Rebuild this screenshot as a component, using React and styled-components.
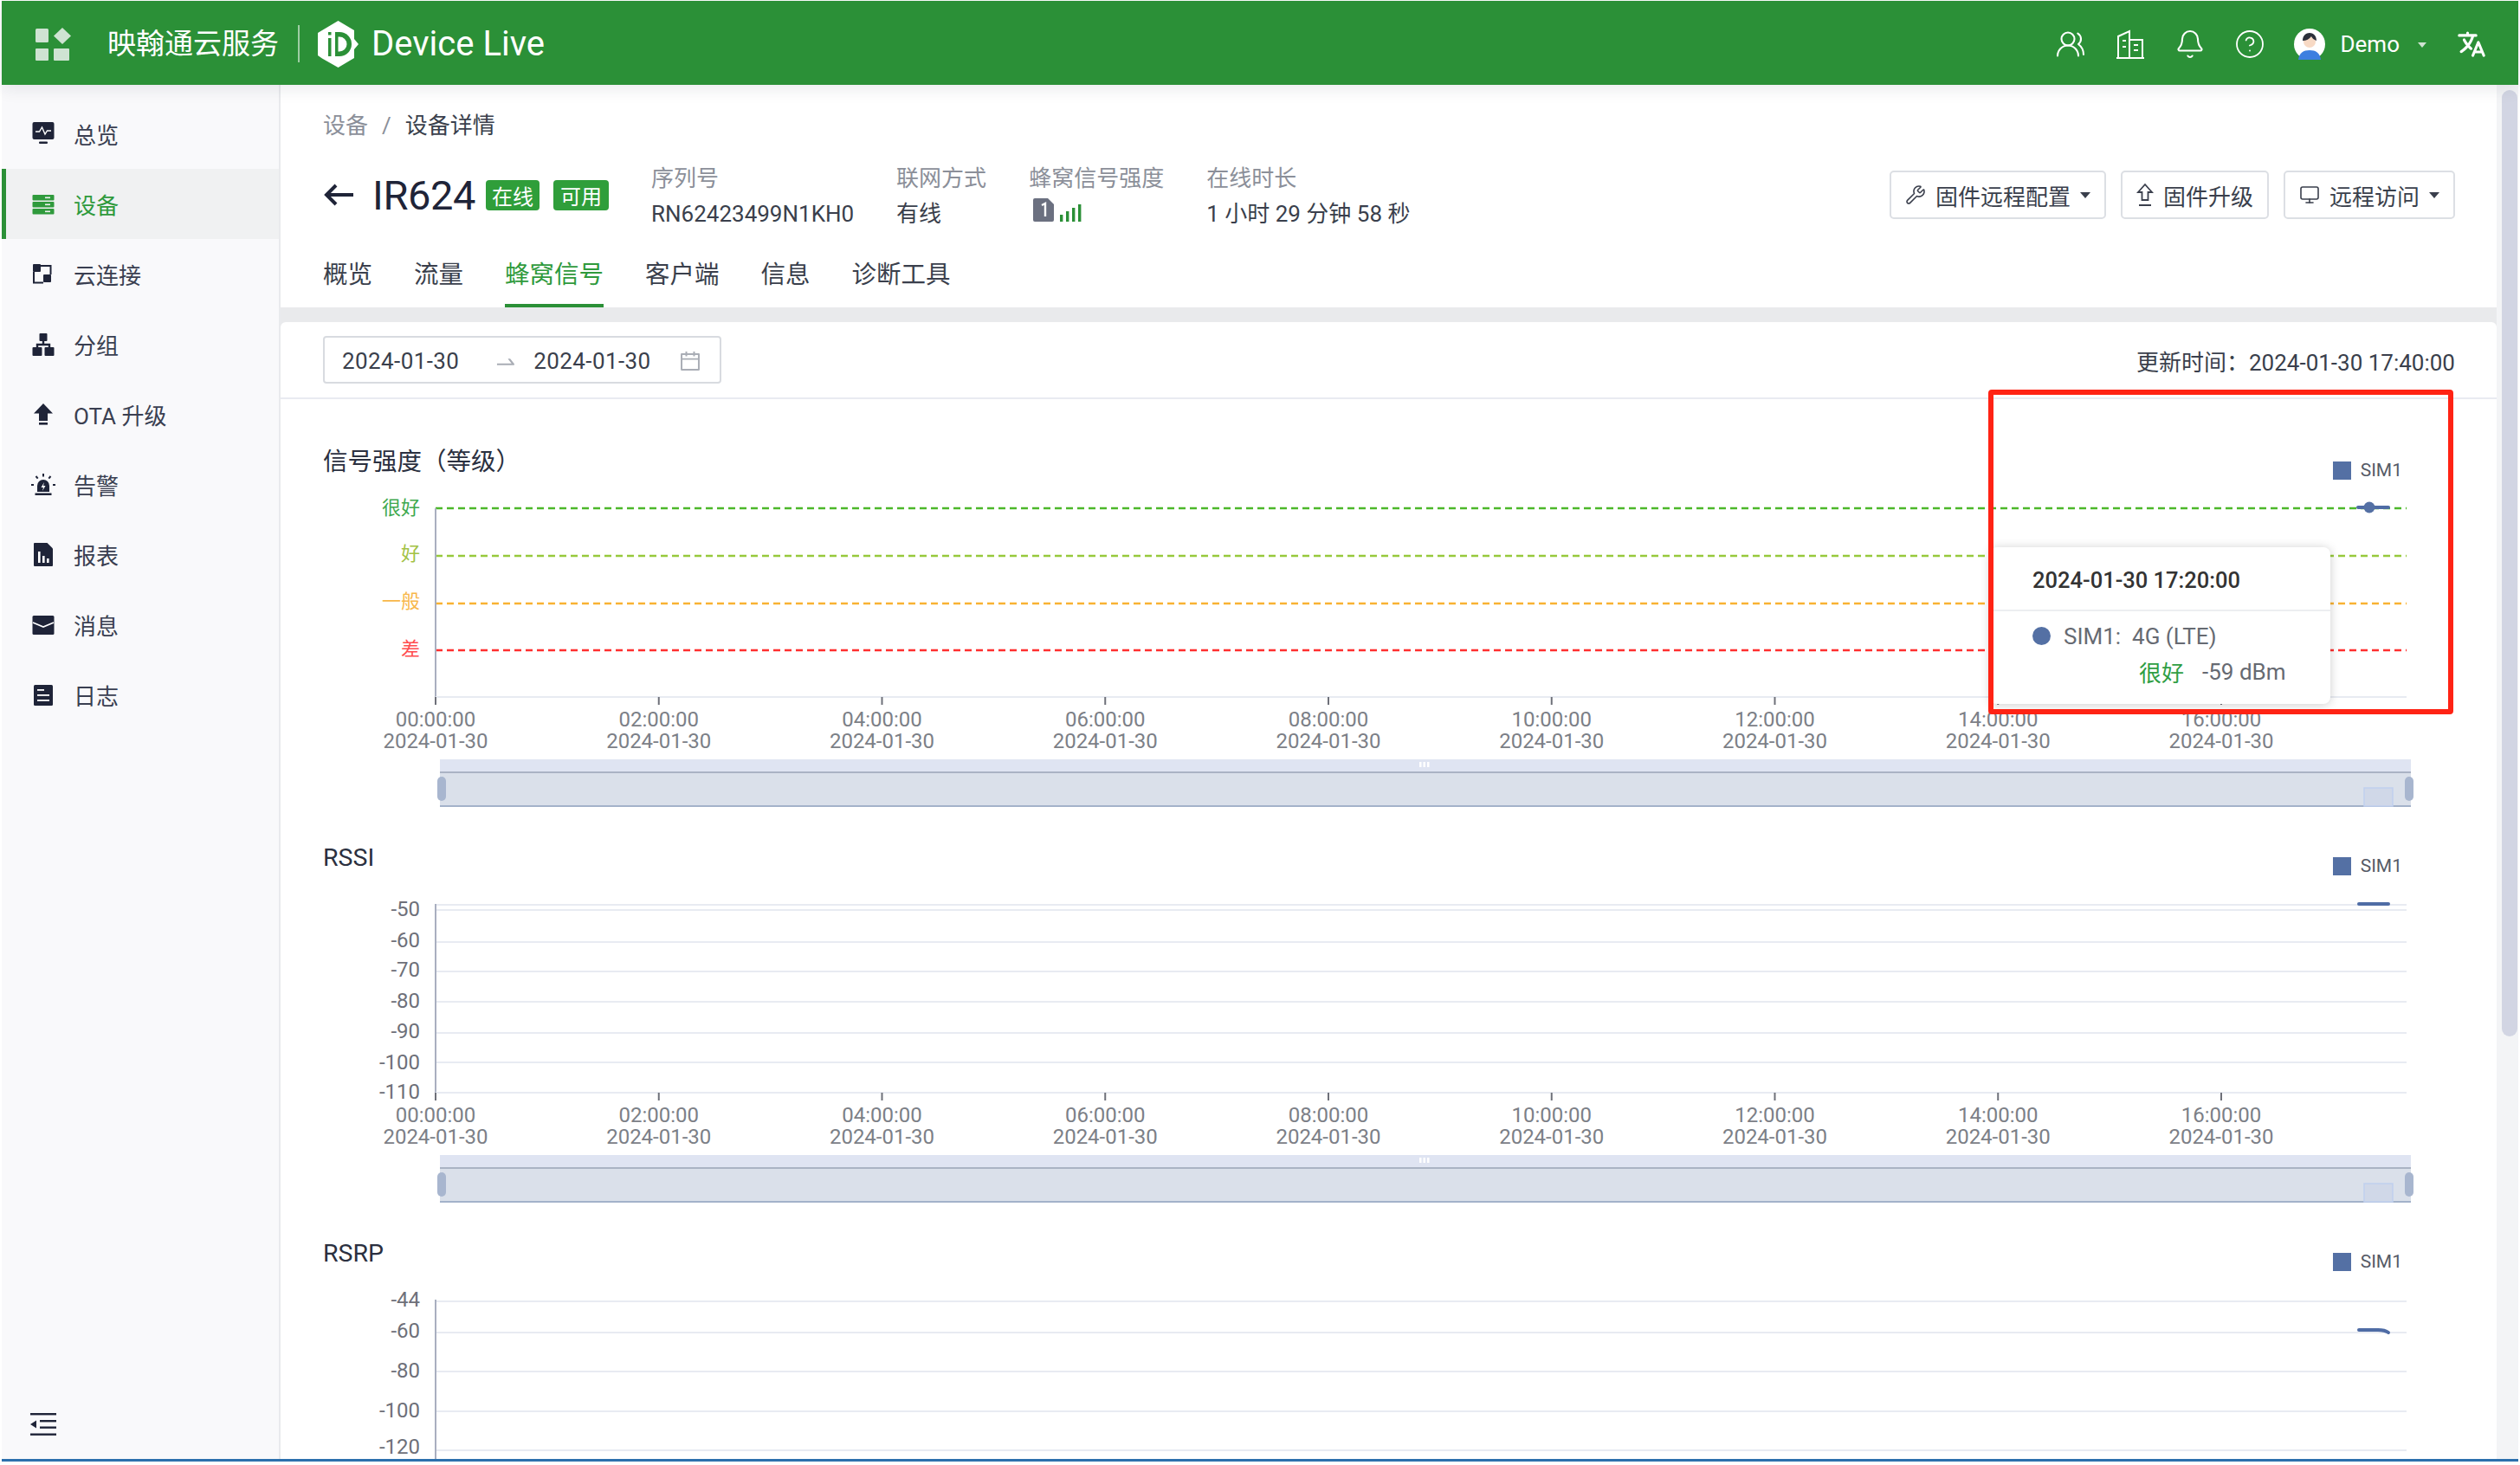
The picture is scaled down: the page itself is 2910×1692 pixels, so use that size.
import React from 'react';
import styled, { createGlobalStyle } from 'styled-components';
import { Bell, CircleHelp, UsersRound, Wrench, Monitor } from 'lucide-react';
import { AiOutlineSwapRight, AiOutlineCalendar } from 'react-icons/ai';
import { IoLanguage } from 'react-icons/io5';

const FONT = `Roboto, "Noto Sans CJK SC", sans-serif`;
const DARK = '#1f2438';
const GREEN = '#2b9037';

const GlobalStyle = createGlobalStyle`
  html, body {
    margin: 0;
    padding: 0;
    background: #fff;
  }
  * { box-sizing: border-box; }
`;

const Shell = styled.div`
  height: 100vh;
  padding: 1px 2px 4px;
  display: flex;
  flex-direction: column;
  overflow: hidden;
  font-family: ${FONT};
  font-size: 26px;
  color: #3a3f4c;
`;

const Header = styled.header`
  flex: 0 0 97px;
  display: flex;
  align-items: center;
  background: ${GREEN};
  color: #fff;
  padding: 2px 36px 0 39px;
  box-shadow: 0 4px 18px rgba(30, 40, 60, 0.1);
  position: relative;
  z-index: 2;
`;

const AppsIcon = styled.svg`
  width: 41px;
  height: 38px;
  flex: none;
`;

const BrandName = styled.div`
  margin-left: 42px;
  font-size: 33px;
  line-height: 1;
  white-space: nowrap;
`;

const BrandDivider = styled.div`
  width: 2px;
  height: 43px;
  margin: 0 21px 0 22px;
  background: rgba(255, 255, 255, 0.55);
`;

const LogoMark = styled.svg`
  width: 47px;
  height: 54px;
  flex: none;
`;

const ProductName = styled.div`
  margin-left: 15px;
  font-size: 40px;
  line-height: 1;
  white-space: nowrap;
`;

const HeaderRight = styled.div`
  margin-left: auto;
  display: flex;
  align-items: center;
`;

const HeaderIcon = styled.div`
  width: 36px;
  height: 40px;
  margin-right: 33px;
  display: flex;
  align-items: center;
  justify-content: center;
`;

const Avatar = styled.svg`
  width: 36px;
  height: 36px;
  flex: none;
`;

const UserName = styled.span`
  margin-left: 18px;
  font-size: 26px;
`;

const Caret = styled.i`
  display: block;
  flex: none;
  width: 0;
  height: 0;
  border-left: ${p => p.$size || 6}px solid transparent;
  border-right: ${p => p.$size || 6}px solid transparent;
  border-top: ${p => (p.$size || 6) + 1}px solid ${p => p.$color || '#3a3f4c'};
`;

const UserCaret = styled(Caret)`
  margin: 2px 34px 0 21px;
`;

const Body = styled.div`
  flex: 1;
  min-height: 0;
  display: flex;
  border-bottom: 3px solid #2c70ad;
`;

const Sidebar = styled.nav`
  flex: 0 0 322px;
  display: flex;
  flex-direction: column;
  padding: 16px 0 27px;
  background: #f9f9fb;
  border-right: 2px solid #e9eaed;
`;

const NavItem = styled.a`
  height: 81px;
  flex: none;
  display: flex;
  align-items: center;
  gap: 20px;
  padding-left: 28px;
  border-left: 5px solid ${p => (p.$active ? GREEN : 'transparent')};
  background: ${p => (p.$active ? '#f0f1f2' : 'transparent')};
  color: ${p => (p.$active ? '#2f9a3c' : '#3a3f51')};
  font-size: 26px;
  white-space: nowrap;
`;

const NavIcon = styled.svg`
  width: 30px;
  height: 30px;
  flex: none;
  fill: ${p => p.$color || DARK};
`;

const Collapse = styled.svg`
  width: 30px;
  height: 26px;
  margin: auto 0 0 33px;
  flex: none;
`;

const Main = styled.main`
  flex: 1;
  min-width: 0;
  display: flex;
`;

const Content = styled.div`
  flex: 1;
  min-width: 0;
  display: flex;
  flex-direction: column;
  background: #e9eaec;
  overflow: hidden;
`;

const PageHead = styled.div`
  flex: none;
  background: #fff;
  padding: 26px 48px 0 49px;
`;

const Breadcrumb = styled.div`
  display: flex;
  gap: 16px;
  line-height: 42px;
  color: #8b8f99;
`;

const Crumb = styled.span`
  color: ${p => (p.$current ? '#3a3f4c' : 'inherit')};
`;

const TitleRow = styled.div`
  margin-top: 18px;
  height: 82px;
  display: flex;
  align-items: center;
`;

const BackArrow = styled.svg`
  width: 36px;
  height: 28px;
  flex: none;
  margin-right: 21px;
`;

const DeviceName = styled.h1`
  margin: 0 12px 0 0;
  font-size: 47px;
  font-weight: 400;
  letter-spacing: -0.4px;
  line-height: 1;
  color: ${DARK};
`;

const Tag = styled.span`
  height: 35px;
  padding: 0 ${p => (p.$wide ? 8 : 7)}px;
  margin-right: 16px;
  display: flex;
  align-items: center;
  border-radius: 4px;
  background: #2f9e3a;
  color: #fff;
  font-size: 24px;
`;

const MetaList = styled.div`
  margin: 3px 0 0 33px;
  display: flex;
  gap: 49px;
`;

const MetaCol = styled.div`
  display: flex;
  flex-direction: column;
  line-height: 41px;
  white-space: nowrap;
`;

const MetaLabel = styled.span`
  color: #8b8f99;
`;

const SignalIcon = styled.svg`
  width: 60px;
  height: 30px;
  margin: 1px 0 0 4px;
`;

const Actions = styled.div`
  margin-left: auto;
  display: flex;
  gap: 17px;
`;

const ActionButton = styled.button`
  height: 56px;
  padding: 0 16px;
  display: flex;
  align-items: center;
  gap: 11px;
  background: #fff;
  border: 2px solid #dcdfe4;
  border-radius: 5px;
  font: inherit;
  color: #3a3f4c;
  white-space: nowrap;
`;

const Tabs = styled.div`
  margin-top: 9px;
  display: flex;
  gap: 48px;
`;

const Tab = styled.div`
  height: 80px;
  padding-top: 2px;
  display: flex;
  align-items: center;
  font-size: 28.5px;
  border-bottom: 4px solid ${p => (p.$active ? GREEN : 'transparent')};
  color: ${p => (p.$active ? '#2f9a3c' : '#3a3f4c')};
`;

const Card = styled.section`
  flex: 1;
  min-height: 0;
  margin-top: 17px;
  background: #fff;
  border-radius: 6px 6px 0 0;
`;

const Toolbar = styled.div`
  height: 89px;
  padding: 0 48px 0 49px;
  display: flex;
  align-items: center;
  justify-content: space-between;
  border-bottom: 2px solid #e9ebf1;
`;

const RangePicker = styled.div`
  width: 460px;
  height: 55px;
  padding: 2px 20px 0;
  display: flex;
  align-items: center;
  border: 2px solid #d8dbe0;
  border-radius: 4px;
  color: #3a3f4c;
  letter-spacing: 0.4px;
`;

const RangeArrow = styled.span`
  display: flex;
  margin: 2px 18px 0 40px;
  color: #a9adb5;
`;

const RangeCalendar = styled.span`
  display: flex;
  margin-left: auto;
  color: #a9adb5;
`;

const UpdatedAt = styled.div`
  margin-top: 2px;
  white-space: nowrap;
`;

const ChartList = styled.div`
  padding: 50px 48px 0 49px;
  display: flex;
  flex-direction: column;
  gap: 22px;
`;

const ChartBlock = styled.div`
  position: relative;
`;

const ChartHead = styled.div`
  height: 42px;
  display: flex;
  align-items: flex-end;
  justify-content: space-between;
`;

const ChartTitle = styled.h3`
  margin: 0 0 -2px;
  font-size: 28.5px;
  font-weight: 400;
  line-height: 42px;
  color: #2b3040;
`;

const Legend = styled.div`
  margin: 0 61px -1px 0;
  display: flex;
  align-items: center;
  gap: 11px;
  font-size: 21px;
  line-height: 22px;
  color: #555a66;
`;

const LegendSwatch = styled.i`
  display: block;
  width: 21px;
  height: 21px;
  background: #5470a4;
`;

const Plot = styled.svg`
  display: block;
  width: 2462px;
  height: 393px;
`;

const AxisText = styled.text`
  font-family: ${FONT};
  font-size: ${p => p.$size || 24}px;
  fill: ${p => p.$color || '#7c8087'};
  text-anchor: ${p => p.$anchor || 'middle'};
  dominant-baseline: central;
`;

const Tooltip = styled.div`
  position: absolute;
  left: 1925px;
  top: 121px;
  width: 393px;
  height: 181px;
  background: #fff;
  border-radius: 8px;
  box-shadow: 0 1px 12px rgba(0, 0, 0, 0.2);
  z-index: 3;
`;

const TooltipTitle = styled.div`
  height: 74px;
  padding: 3px 0 0 49px;
  display: flex;
  align-items: center;
  border-bottom: 2px solid #eceef1;
  font-size: 25.5px;
  font-weight: 500;
  color: #333;
`;

const TooltipRow = styled.div`
  height: 41px;
  display: flex;
  align-items: center;
  margin-top: ${p => p.$gap || 0}px;
  padding-left: ${p => p.$indent}px;
  color: #666a72;
  white-space: pre;
`;

const TooltipDot = styled.i`
  width: 21px;
  height: 21px;
  margin-right: 15px;
  border-radius: 50%;
  background: #5470a4;
`;

const TooltipLevel = styled.span`
  margin-right: 21px;
  color: #2f9e44;
`;

const Highlight = styled.div`
  position: absolute;
  left: 1923px;
  top: -61px;
  width: 537px;
  height: 375px;
  border: 6px solid #ff2314;
  border-radius: 4px;
  pointer-events: none;
  z-index: 4;
`;

const ScrollTrack = styled.div`
  flex: 0 0 25px;
  padding: 6px 0 0 6px;
  background: #f3f4f6;
`;

const ScrollThumb = styled.div`
  width: 18px;
  height: 1093px;
  border-radius: 9px;
  background: #d2d5e3;
`;

const hoursX = [0, 1, 2, 3, 4, 5, 6, 7, 8].map(i => 130 + 257.75 * i);
const hourLabels = ['00:00:00', '02:00:00', '04:00:00', '06:00:00', '08:00:00', '10:00:00', '12:00:00', '14:00:00', '16:00:00'];

const signalChart = {
  title: '信号强度（等级）',
  labels: [
    { text: '很好', y: 33, color: '#3fa94f', size: 22 },
    { text: '好', y: 86, color: '#a3c246', size: 22 },
    { text: '一般', y: 141, color: '#f8b74a', size: 22 },
    { text: '差', y: 196, color: '#ff4d4f', size: 22 },
  ],
  grid: [],
  dashed: [
    { y: 34, color: '#4cb82a' },
    { y: 89, color: '#97c93c' },
    { y: 144, color: '#f9b233' },
    { y: 198, color: '#ff2f2f' },
  ],
  data: 'M2350 33 H2385',
  dot: { x: 2363, y: 33 },
  axisY: 252,
};

const rssiChart = {
  title: 'RSSI',
  labels: [
    { text: '-50', y: 40 },
    { text: '-60', y: 76 },
    { text: '-70', y: 110 },
    { text: '-80', y: 146 },
    { text: '-90', y: 181 },
    { text: '-100', y: 217 },
    { text: '-110', y: 251 },
  ],
  grid: [35, 41, 78, 112, 147, 183, 217],
  dashed: [],
  data: 'M2351 34 H2385',
  axisY: 252,
};

const rsrpChart = {
  title: 'RSRP',
  labels: [
    { text: '-44', y: 34 },
    { text: '-60', y: 70 },
    { text: '-80', y: 116 },
    { text: '-100', y: 162 },
    { text: '-120', y: 204 },
  ],
  grid: [36, 72, 117, 163, 208],
  dashed: [],
  data: 'M2351 69 H2373 Q2381 69 2385 72',
  axisY: 254,
  cut: true,
};

const SignalChart = ({ chart, children }) => (
  <ChartBlock>
    <ChartHead>
      <ChartTitle>{chart.title}</ChartTitle>
      <Legend>
        <LegendSwatch />
        SIM1
      </Legend>
    </ChartHead>
    <Plot viewBox="0 0 2462 393">
      {chart.grid.map(y => (
        <line key={y} x1="130" x2="2406" y1={y} y2={y} stroke="#e8ebf2" strokeWidth="2" />
      ))}
      {chart.dashed.map(d => (
        <line key={d.y} x1="130" x2="2406" y1={d.y} y2={d.y} stroke={d.color} strokeWidth="2.5" strokeDasharray="8 5" />
      ))}
      <line x1="130" x2="130" y1="34" y2={chart.axisY + 9} stroke="#a9afc0" strokeWidth="2" />
      {chart.labels.map(l => (
        <AxisText key={l.text} x="112" y={l.y} $anchor="end" $size={l.size} $color={l.color || '#6e7079'}>
          {l.text}
        </AxisText>
      ))}
      <path d={chart.data} fill="none" stroke="#4f6ca5" strokeWidth="4" strokeLinecap="round" />
      {chart.dot && <circle cx={chart.dot.x} cy={chart.dot.y} r="6.5" fill="#5470a4" />}
      {!chart.cut && (
        <>
          <line x1="130" x2="2406" y1={chart.axisY} y2={chart.axisY} stroke="#e8ebf2" strokeWidth="2" />
          {hoursX.map((x, i) => (
            <g key={x}>
              <line x1={x} x2={x} y1={chart.axisY} y2={chart.axisY + 9} stroke="#6e7079" strokeWidth="2" />
              <AxisText x={x} y="278">{hourLabels[i]}</AxisText>
              <AxisText x={x} y="303">2024-01-30</AxisText>
            </g>
          ))}
          <rect x="135" y="324" width="2276" height="15" fill="#dfe4f2" />
          <rect x="135" y="339" width="2276" height="39" fill="#dae0ea" />
          <line x1="135" x2="2411" y1="339" y2="339" stroke="#aab3c4" strokeWidth="2" />
          <line x1="135" x2="2411" y1="378" y2="378" stroke="#a3b2ca" strokeWidth="2" />
          <rect x="1266" y="327" width="2.5" height="6" fill="#fff" />
          <rect x="1270.5" y="327" width="2.5" height="6" fill="#fff" />
          <rect x="1275" y="327" width="2.5" height="6" fill="#fff" />
          <rect x="2357" y="357" width="33" height="21" fill="#d0d8e8" stroke="#c0cfee" strokeWidth="1.5" />
          <rect x="132" y="344" width="10" height="28" rx="5" fill="#a8b6cf" />
          <rect x="2404" y="344" width="10" height="28" rx="5" fill="#a8b6cf" />
        </>
      )}
    </Plot>
    {children}
  </ChartBlock>
);

const navItems = [
  { key: 'overview', label: '总览' },
  { key: 'devices', label: '设备', active: true },
  { key: 'cloud', label: '云连接' },
  { key: 'groups', label: '分组' },
  { key: 'ota', label: 'OTA 升级' },
  { key: 'alerts', label: '告警' },
  { key: 'reports', label: '报表' },
  { key: 'messages', label: '消息' },
  { key: 'logs', label: '日志' },
];

const navGlyphs = {
  overview: (
    <>
      <rect x="2.5" y="1" width="25" height="20" rx="2" />
      <polyline points="6,12 10.5,12 13.5,7 17,15 19.5,11 24,11" fill="none" stroke="#fff" strokeWidth="1.4" />
      <rect x="10" y="23.5" width="10" height="2.5" rx="1" />
    </>
  ),
  devices: (
    <>
      <rect x="2.5" y="4" width="25" height="6.5" rx="1" />
      <rect x="2.5" y="12" width="25" height="6.5" rx="1" />
      <rect x="2.5" y="20" width="25" height="6.5" rx="1" />
      <rect x="17" y="6.5" width="6" height="1.6" fill="#f0f1f2" />
      <rect x="17" y="14.5" width="6" height="1.6" fill="#f0f1f2" />
      <rect x="17" y="22.5" width="6" height="1.6" fill="#f0f1f2" />
    </>
  ),
  cloud: (
    <>
      <rect x="3" y="3" width="9" height="9" rx="1" />
      <rect x="15" y="15" width="9" height="9" rx="1" />
      <path d="M12 5h11.5v10M4 12v12.5h11" fill="none" stroke={DARK} strokeWidth="2" />
    </>
  ),
  groups: (
    <>
      <rect x="10.5" y="2" width="9" height="9" rx="1" />
      <rect x="2.5" y="18" width="11" height="10" rx="1" />
      <rect x="16.5" y="18" width="11" height="10" rx="1" />
      <path d="M15 11v4M8 18v-3h14v3" fill="none" stroke={DARK} strokeWidth="2.4" />
    </>
  ),
  ota: (
    <>
      <polygon points="15,2 26,13.5 20,13.5 20,22 10,22 10,13.5 4,13.5" />
      <rect x="10" y="24" width="10" height="2.6" />
    </>
  ),
  alerts: (
    <>
      <path d="M8 23v-7a7 7 0 0 1 14 0v7z" />
      <rect x="5.5" y="24.5" width="19" height="2.5" />
      <polygon points="16,12 12.5,18 15,18 14,22 17.5,16 15,16" fill="#fff" />
      <path d="M15 2v3.5M6.5 5l2.2 2.6M23.5 5l-2.2 2.6M1 15h3M26 15h3" fill="none" stroke={DARK} strokeWidth="2" />
    </>
  ),
  reports: (
    <>
      <path d="M5 1h14.5L26 7.5V27a1 1 0 0 1-1 1H5a1 1 0 0 1-1-1V2a1 1 0 0 1 1-1z" />
      <rect x="9" y="11" width="2.6" height="13" fill="#fff" />
      <rect x="14" y="16" width="2.6" height="8" fill="#fff" />
      <rect x="19" y="19" width="2.6" height="5" fill="#fff" />
    </>
  ),
  messages: (
    <>
      <rect x="2.5" y="4" width="25" height="22" rx="1.5" />
      <path d="M3 12l12 5 12-5" fill="none" stroke="#fff" strokeWidth="1.8" />
    </>
  ),
  logs: (
    <>
      <rect x="4" y="3" width="22" height="24" rx="1.5" />
      <rect x="8" y="8" width="8" height="1.8" fill="#fff" />
      <rect x="8" y="14" width="14" height="1.8" fill="#fff" />
      <rect x="8" y="20" width="14" height="1.8" fill="#fff" />
    </>
  ),
};

const metas = [
  { label: '序列号', value: 'RN62423499N1KH0' },
  { label: '联网方式', value: '有线' },
  { label: '蜂窝信号强度', signal: true },
  { label: '在线时长', value: '1 小时 29 分钟 58 秒' },
];

const tabs = ['概览', '流量', '蜂窝信号', '客户端', '信息', '诊断工具'];

const App = () => (
  <Shell>
    <GlobalStyle />
    <Header>
      <AppsIcon viewBox="0 0 41 38">
        <rect x="0" y="1" width="15" height="16" rx="1.5" fill="#cfe3d2" />
        <polygon points="31,0 41,9.5 31,19 21,9.5" fill="#cfe3d2" />
        <rect x="0" y="24" width="15" height="14" rx="1" fill="#cfe3d2" />
        <rect x="21" y="24" width="18" height="14" rx="1" fill="#cfe3d2" />
      </AppsIcon>
      <BrandName>映翰通云服务</BrandName>
      <BrandDivider />
      <LogoMark viewBox="0 0 47 54">
        <path d="M23.5 0L42 11v10l5 6-5 6v10L23.5 54 5 43.5 0 40V14l5-3z" fill="#fff" />
        <path d="M20 13h5a14 14 0 0 1 0 28h-5z" fill={GREEN} />
        <path d="M23.5 18.5h1.5a8.5 8.5 0 0 1 0 17h-1.5z" fill="#fff" />
        <rect x="12" y="13" width="3.5" height="3.5" fill={GREEN} />
        <rect x="12" y="20" width="3.5" height="21" fill={GREEN} />
      </LogoMark>
      <ProductName>Device Live</ProductName>
      <HeaderRight>
        <HeaderIcon><UsersRound size={40} strokeWidth={1.4} /></HeaderIcon>
        <HeaderIcon>
          <svg width="32" height="34" viewBox="0 0 32 34" fill="none" stroke="#fff" strokeWidth="2">
            <path d="M2 33V8l13-6v31M15 12h15v21M0 33h32M7 13h4M7 20h4M20 18h5M20 24h5" />
          </svg>
        </HeaderIcon>
        <HeaderIcon><Bell size={36} strokeWidth={1.4} /></HeaderIcon>
        <HeaderIcon><CircleHelp size={42} strokeWidth={1.2} /></HeaderIcon>
        <Avatar viewBox="0 0 36 36">
          <circle cx="18" cy="18" r="18" fill="#fff" />
          <path d="M5 36c1-8 6-11 13-11s12 3 13 11z" fill="#3d7fe0" />
          <circle cx="18" cy="15" r="7" fill="#f7d9c4" />
          <path d="M10 14c0-6 4-9 8-9s8 3 8 9c-3-1-5-3-6-5-2 3-6 5-10 5z" fill="#2b2f3a" />
        </Avatar>
        <UserName>Demo</UserName>
        <UserCaret $size={5} $color="#cfe3d2" />
        <IoLanguage size={36} />
      </HeaderRight>
    </Header>
    <Body>
      <Sidebar>
        {navItems.map(item => (
          <NavItem key={item.key} $active={item.active}>
            <NavIcon viewBox="0 0 30 30" $color={item.active ? '#2f9a3c' : DARK}>
              {navGlyphs[item.key]}
            </NavIcon>
            {item.label}
          </NavItem>
        ))}
        <Collapse viewBox="0 0 30 26" fill={DARK}>
          <rect x="0" y="0" width="30" height="2.4" />
          <rect x="11" y="8" width="19" height="2.4" />
          <rect x="11" y="15.5" width="19" height="2.4" />
          <rect x="0" y="23.5" width="30" height="2.4" />
          <polygon points="0,13 7,8.5 7,17.5" />
        </Collapse>
      </Sidebar>
      <Main>
        <Content>
          <PageHead>
            <Breadcrumb>
              <Crumb>设备</Crumb>
              <Crumb>/</Crumb>
              <Crumb $current>设备详情</Crumb>
            </Breadcrumb>
            <TitleRow>
              <BackArrow viewBox="0 0 36 28">
                <path d="M35 14H5M15 3L4 14l11 11" fill="none" stroke={DARK} strokeWidth="4" />
              </BackArrow>
              <DeviceName>IR624</DeviceName>
              <Tag>在线</Tag>
              <Tag $wide>可用</Tag>
              <MetaList>
                {metas.map(m => (
                  <MetaCol key={m.label}>
                    <MetaLabel>{m.label}</MetaLabel>
                    {m.signal ? (
                      <SignalIcon viewBox="0 0 60 30">
                        <path d="M1 3a2 2 0 0 1 2-2h15l7 7v18a2 2 0 0 1-2 2H3a2 2 0 0 1-2-2z" fill="#6b7080" />
                        <path d="M11 9l4-2v15" fill="none" stroke="#fff" strokeWidth="2.4" />
                        <rect x="32" y="20" width="3.4" height="8" fill={GREEN} />
                        <rect x="39" y="16" width="3.4" height="12" fill={GREEN} />
                        <rect x="46" y="12" width="3.4" height="16" fill={GREEN} />
                        <rect x="53" y="8" width="3.4" height="20" fill={GREEN} />
                      </SignalIcon>
                    ) : (
                      <span>{m.value}</span>
                    )}
                  </MetaCol>
                ))}
              </MetaList>
              <Actions>
                <ActionButton>
                  <Wrench size={24} strokeWidth={1.6} />
                  固件远程配置
                  <Caret />
                </ActionButton>
                <ActionButton>
                  <svg width="20" height="28" viewBox="0 0 20 28" fill="none" stroke="#3a3f4c" strokeWidth="1.8">
                    <path d="M10 2L2 11h4.5v9h7v-9H18zM3 26h14" />
                  </svg>
                  固件升级
                </ActionButton>
                <ActionButton>
                  <Monitor size={24} strokeWidth={1.6} />
                  远程访问
                  <Caret />
                </ActionButton>
              </Actions>
            </TitleRow>
            <Tabs>
              {tabs.map(t => (
                <Tab key={t} $active={t === '蜂窝信号'}>{t}</Tab>
              ))}
            </Tabs>
          </PageHead>
          <Card>
            <Toolbar>
              <RangePicker>
                <span>2024-01-30</span>
                <RangeArrow><AiOutlineSwapRight size={28} /></RangeArrow>
                <span>2024-01-30</span>
                <RangeCalendar><AiOutlineCalendar size={28} /></RangeCalendar>
              </RangePicker>
              <UpdatedAt>更新时间：2024-01-30 17:40:00</UpdatedAt>
            </Toolbar>
            <ChartList>
              <SignalChart chart={signalChart}>
                <Tooltip>
                  <TooltipTitle>2024-01-30 17:20:00</TooltipTitle>
                  <TooltipRow $indent={49} $gap={8}>
                    <TooltipDot />
                    {'SIM1:  4G (LTE)'}
                  </TooltipRow>
                  <TooltipRow $indent={172}>
                    <TooltipLevel>很好</TooltipLevel>
                    -59 dBm
                  </TooltipRow>
                </Tooltip>
                <Highlight />
              </SignalChart>
              <SignalChart chart={rssiChart} />
              <SignalChart chart={rsrpChart} />
            </ChartList>
          </Card>
        </Content>
        <ScrollTrack>
          <ScrollThumb />
        </ScrollTrack>
      </Main>
    </Body>
  </Shell>
);

export default App;
